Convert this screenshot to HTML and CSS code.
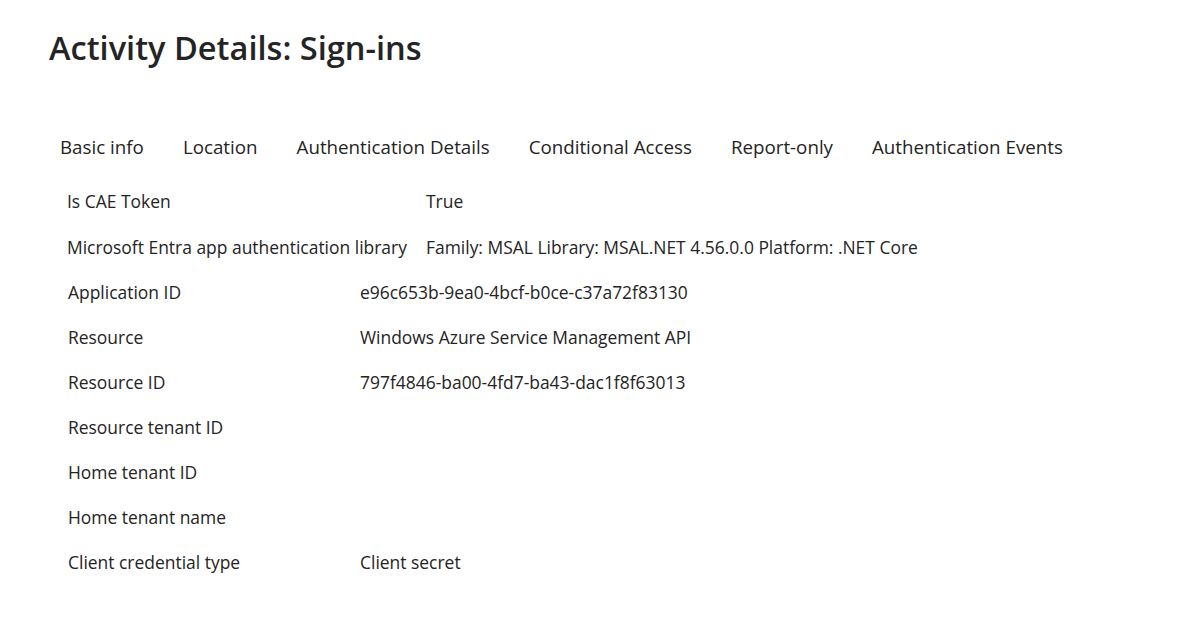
FILE: index.html
```html
<!DOCTYPE html>
<html lang="en">
<head>
<meta charset="utf-8">
<title>Activity Details: Sign-ins</title>
<link rel="stylesheet" href="styles.css">
</head>
<body>
<main class="page">
  <h1 class="title">Activity Details: Sign-ins</h1>
  <nav class="tabs">
    <span class="tab">Basic info</span>
    <span class="tab">Location</span>
    <span class="tab">Authentication Details</span>
    <span class="tab">Conditional Access</span>
    <span class="tab">Report-only</span>
    <span class="tab">Authentication Events</span>
  </nav>
  <dl class="details details-top">
    <dt>Is CAE Token</dt><dd>True</dd>
    <dt>Microsoft Entra app authentication library</dt><dd>Family: MSAL Library: MSAL.NET 4.56.0.0 Platform: .NET Core</dd>
  </dl>
  <dl class="details details-app">
    <dt>Application ID</dt><dd>e96c653b-9ea0-4bcf-b0ce-c37a72f83130</dd>
    <dt>Resource</dt><dd>Windows Azure Service Management API</dd>
    <dt>Resource ID</dt><dd>797f4846-ba00-4fd7-ba43-dac1f8f63013</dd>
    <dt>Resource tenant ID</dt><dd></dd>
    <dt>Home tenant ID</dt><dd></dd>
    <dt>Home tenant name</dt><dd></dd>
    <dt>Client credential type</dt><dd>Client secret</dd>
  </dl>
</main>
</body>
</html>
```
FILE: styles.css
```css
html, body {
  margin: 0;
  padding: 0;
  background: #ffffff;
}
body {
  font-family: "Open Sans", "Noto Sans", "Liberation Sans", sans-serif;
  color: #242424;
}
.page {
  padding-left: 49px;
}
.title {
  margin: 28px 0 0 0;
  font-size: 32.6px;
  line-height: 40px;
  font-weight: 600;
  color: #242424;
}
.tabs {
  display: flex;
  gap: 39px;
  margin-top: 64px;
  padding-left: 11px;
  font-size: 18.75px;
  line-height: 30px;
}
.details {
  display: grid;
  margin: 0;
  font-size: 17.45px;
  align-items: center;
}
.details dt, .details dd {
  margin: 0;
}
.details-top {
  grid-template-columns: 359px 1fr;
  grid-auto-rows: 46px;
  margin-top: 16px;
  padding-left: 18px;
}
.details-app {
  grid-template-columns: 292px 1fr;
  grid-auto-rows: 45px;
  margin-top: -1px;
  padding-left: 19px;
}
```
